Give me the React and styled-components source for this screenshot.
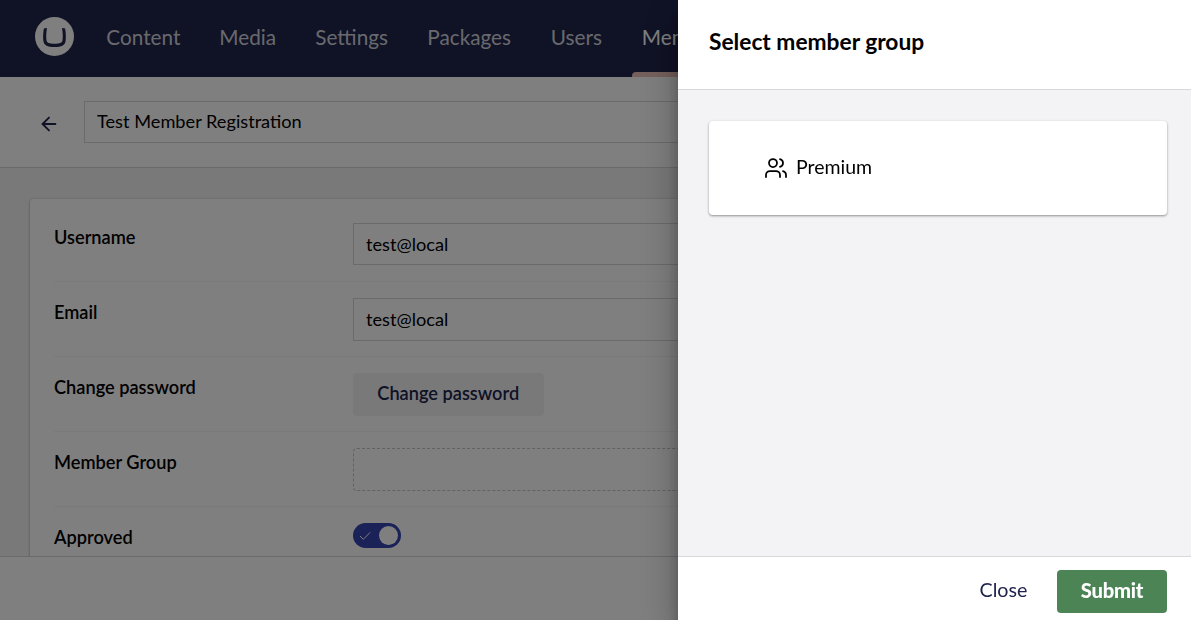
import React from "react";
import styled, { createGlobalStyle } from "styled-components";

const GlobalStyle = createGlobalStyle`
  * { box-sizing: border-box; }
  html, body { margin: 0; height: 100%; overflow: hidden; }
  body {
    font-family: Lato, "Liberation Sans", sans-serif;
    font-size: 18.2px;
    color: #000;
    background: #fff;
  }
  button, input { font: inherit; color: inherit; }
`;

const Shell = styled.div`
  display: flex;
  flex-direction: column;
  width: 100vw;
  height: 620px;
  overflow: hidden;
`;

const TopBar = styled.header`
  flex: none;
  display: flex;
  align-items: center;
  height: 77px;
  padding-left: 35px;
  background: #20244c;
`;

const Logo = styled.svg`
  display: block;
  flex: none;
  width: 39px;
  height: 39px;
  margin: 0 10px 4px 0;
`;

const Nav = styled.nav`
  display: flex;
  height: 100%;
`;

const NavItem = styled.a`
  position: relative;
  display: flex;
  align-items: center;
  flex: none;
  width: ${(p) => p.$width}px;
  padding: 0 0 3px 22.3px;
  font-size: 20.75px;
  color: ${(p) => (p.$active ? "#fff" : "#d2d3db")};
  white-space: nowrap;

  &::after {
    content: "";
    display: ${(p) => (p.$active ? "block" : "none")};
    position: absolute;
    left: 12.5px;
    right: 0;
    bottom: 0;
    height: 5px;
    border-radius: 4px 4px 0 0;
    background: #ebc1bb;
  }
`;

const Toolbar = styled.div`
  flex: none;
  display: flex;
  align-items: center;
  height: 91px;
  padding: 0 30px 0 38px;
  background: #fff;
  border-bottom: 1px solid #d8d7d9;
`;

const BackLink = styled.a`
  display: flex;
  flex: none;
  width: 46px;
  padding-top: 3px;
`;

const TextField = styled.input`
  flex: 1;
  width: 100%;
  min-width: 0;
  height: ${(p) => p.$height || 42}px;
  padding: 0 12px ${(p) => p.$lift || 1}px;
  font-size: 18.2px;
  border: 1px solid #d8d7d9;
  border-radius: 0;
  background: #fff;
  outline: none;
`;

const Workspace = styled.main`
  flex: 1;
  min-height: 0;
  overflow: hidden;
  padding: 31px 30px 0;
  background: #f3f3f5;
`;

const Panel = styled.section`
  padding: 0 24px;
  height: 500px;
  background: #fff;
  border-radius: 4px;
  box-shadow: 0 1px 3px rgba(0, 0, 0, 0.24), 0 0 2px rgba(0, 0, 0, 0.16);
`;

const Property = styled.div`
  display: flex;
  height: ${(p) => (p.$first ? 83 : 75)}px;
  padding-top: ${(p) => (p.$first ? 24 : 16)}px;
  border-bottom: 1px solid #f6f4f4;
`;

const Label = styled.div`
  flex: none;
  width: 299px;
  padding-top: 3px;
  font-size: 18.2px;
  line-height: 22px;
  font-weight: 600;
`;

const Control = styled.div`
  flex: 1;
  min-width: 0;
`;

const SecondaryButton = styled.button`
  display: block;
  width: 190.5px;
  height: 43px;
  padding: 0 0 3px;
  border: 0;
  border-radius: 4px;
  background: #f3f3f5;
  color: #20244c;
  font-size: 18.2px;
  font-weight: 600;
`;

const EmptyPicker = styled.div`
  height: 43px;
  border: 1px dashed #c4c4c4;
  border-radius: 4px;
`;

const Toggle = styled.div`
  display: flex;
  align-items: center;
  justify-content: space-between;
  width: 47.5px;
  height: 25px;
  padding: 0 2.5px 0 6px;
  border-radius: 13px;
  background: #3544b1;
`;

const Knob = styled.span`
  width: 19px;
  height: 19px;
  border-radius: 50%;
  background: #fff;
`;

const StatusBar = styled.footer`
  flex: none;
  height: 64px;
  background: #fff;
  border-top: 1px solid #d8d7d9;
`;

const Backdrop = styled.div`
  position: fixed;
  inset: 0;
  background: rgba(0, 0, 0, 0.5);
`;

const Drawer = styled.aside`
  position: fixed;
  top: 0;
  right: 0;
  bottom: 0;
  display: flex;
  flex-direction: column;
  width: 513px;
  background: #f3f3f5;
  box-shadow: 0 19px 38px rgba(0, 0, 0, 0.3), 0 15px 12px rgba(0, 0, 0, 0.22);
`;

const DrawerHeader = styled.div`
  flex: none;
  display: flex;
  align-items: center;
  height: 90px;
  padding: 0 31px 5px;
  background: #fff;
  border-bottom: 1px solid #d8d7d9;
`;

const DrawerTitle = styled.h3`
  margin: 0;
  font-size: 22.75px;
  line-height: 28px;
  font-weight: 700;
`;

const DrawerBody = styled.div`
  flex: 1;
  padding: 31px 24px 0 31px;
`;

const OptionCard = styled.div`
  height: 94px;
  padding: 31px 55px;
  background: #fff;
  border-radius: 4px;
  box-shadow: 0 1px 3px rgba(0, 0, 0, 0.24), 0 1px 2px rgba(0, 0, 0, 0.2);
`;

const Option = styled.div`
  display: flex;
  align-items: center;
  gap: 8px;
  height: 31px;
  font-size: 19.5px;

  svg { display: block; margin-top: 1px; }
  span { padding-bottom: 2px; }
`;

const DrawerFooter = styled.div`
  flex: none;
  display: flex;
  justify-content: flex-end;
  height: 64px;
  padding: 13px 24px 0 0;
  background: #fff;
  border-top: 1px solid #d8d7d9;
`;

const ActionButton = styled.button`
  width: ${(p) => p.$width}px;
  height: 43px;
  padding: 0 0 4px;
  border: 0;
  border-radius: 4px;
  background: ${(p) => (p.$positive ? "#4c8456" : "transparent")};
  color: ${(p) => (p.$positive ? "#fff" : "#20244c")};
  font-size: ${(p) => (p.$positive ? 20.2 : 19.7)}px;
  font-weight: ${(p) => (p.$positive ? 900 : 400)};
  letter-spacing: ${(p) => (p.$positive ? "-0.25px" : "normal")};
`;

const sections = [
  { name: "Content", width: 113 },
  { name: "Media", width: 96 },
  { name: "Settings", width: 112 },
  { name: "Packages", width: 123.5 },
  { name: "Users", width: 91 },
  { name: "Members", width: 130, active: true },
];

export default function App() {
  return (
    <>
      <GlobalStyle />
      <Shell>
        <TopBar>
          <Logo viewBox="0 0 39 39">
            <circle cx="19.5" cy="19.5" r="19.5" fill="#fff" />
            <path
              d="M8.900 11.400C8.100 16 7.900 21 8.500 24.500c.7 3.700 3.800 5.500 11 5.500s10.300-1.800 11-5.500c.6-3.500.4-8.500-.4-13.100l-3.100-.4c.9 4.600 1 9.200.5 12.300-.4 2.600-2.400 3.500-8 3.500s-7.600-.9-8-3.500c-.5-3.100-.4-7.700.5-12.300z"
              fill="#20244c"
            />
          </Logo>
          <Nav>
            {sections.map((s) => (
              <NavItem key={s.name} $width={s.width} $active={s.active}>
                {s.name}
              </NavItem>
            ))}
          </Nav>
        </TopBar>
        <Toolbar>
          <BackLink>
            <svg width="22" height="22" viewBox="0 0 24 24" fill="none" stroke="#20244c" strokeWidth="2" strokeLinecap="round" strokeLinejoin="round">
              <path d="m12 19-7-7 7-7" />
              <path d="M19 12H5" />
            </svg>
          </BackLink>
          <TextField $lift={3} defaultValue="Test Member Registration" />
        </Toolbar>
        <Workspace>
          <Panel>
            <Property $first>
              <Label>Username</Label>
              <Control><TextField defaultValue="test@local" /></Control>
            </Property>
            <Property>
              <Label>Email</Label>
              <Control><TextField $height={43} defaultValue="test@local" /></Control>
            </Property>
            <Property>
              <Label>Change password</Label>
              <Control><SecondaryButton>Change password</SecondaryButton></Control>
            </Property>
            <Property>
              <Label>Member Group</Label>
              <Control><EmptyPicker /></Control>
            </Property>
            <Property>
              <Label>Approved</Label>
              <Control>
                <Toggle>
                  <svg width="12" height="10" viewBox="0 0 12 10" fill="none" stroke="#fff" strokeWidth="1">
                    <path d="M1 5l3.300 3.300L11 1.500" />
                  </svg>
                  <Knob />
                </Toggle>
              </Control>
            </Property>
          </Panel>
        </Workspace>
        <StatusBar />
      </Shell>
      <Backdrop />
      <Drawer>
        <DrawerHeader>
          <DrawerTitle>Select member group</DrawerTitle>
        </DrawerHeader>
        <DrawerBody>
          <OptionCard>
            <Option>
              <svg width="24" height="24" viewBox="0 0 24 24" fill="none" stroke="#000" strokeWidth="1.750" strokeLinecap="round" strokeLinejoin="round">
                <path d="M16 21v-2a4 4 0 0 0-4-4H6a4 4 0 0 0-4 4v2" />
                <circle cx="9" cy="7" r="4" />
                <path d="M22 21v-2a4 4 0 0 0-3-3.870" />
                <path d="M16 3.130a4 4 0 0 1 0 7.750" />
              </svg>
              <span>Premium</span>
            </Option>
          </OptionCard>
        </DrawerBody>
        <DrawerFooter>
          <ActionButton $width={107}>Close</ActionButton>
          <ActionButton $width={110} $positive>Submit</ActionButton>
        </DrawerFooter>
      </Drawer>
    </>
  );
}
